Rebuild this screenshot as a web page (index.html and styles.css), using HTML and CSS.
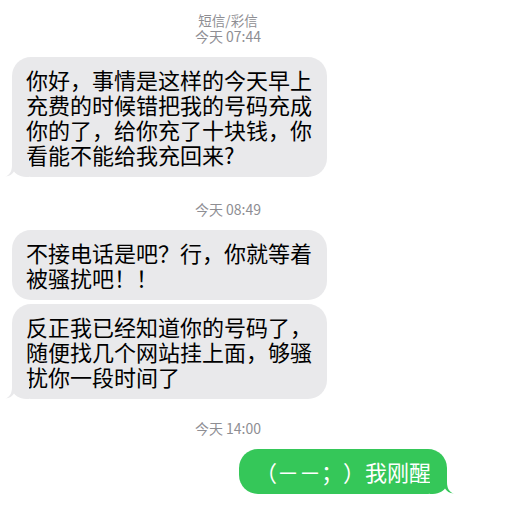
FILE: index.html
```html
<!DOCTYPE html>
<html lang="zh-CN">
<head>
<meta charset="utf-8">
<title>短信/彩信</title>
<link rel="stylesheet" href="styles.css">
</head>
<body>
<div class="thread">
  <div class="stamp">
    <div class="service">短信/彩信</div>
    <div class="time">今天 07:44</div>
  </div>
  <div class="row in">
    <div class="bubble gray tail">你好，事情是这样的今天早上充费的时候错把我的号码充成你的了，给你充了十块钱，你看能不能给我充回来?
      <svg class="tail-left" width="24" height="20" viewBox="0 0 24 20"><path d="M0 19.6 C4.5 19.4 7.5 17 9 14.5 C11.5 18 16 20 24 20 L24 0 L7 0 L7 8 C7 14 5 18 0 19.6 Z" fill="#e9e9eb"/></svg>
    </div>
  </div>

  <div class="stamp gap">
    <div class="time">今天 08:49</div>
  </div>
  <div class="row in">
    <div class="bubble gray">不接电话是吧？行，你就等着被骚扰吧！！</div>
  </div>
  <div class="row in close">
    <div class="bubble gray tail">反正我已经知道你的号码了，随便找几个网站挂上面，够骚扰你一段时间了
      <svg class="tail-left" width="24" height="20" viewBox="0 0 24 20"><path d="M0 19.6 C4.5 19.4 7.5 17 9 14.5 C11.5 18 16 20 24 20 L24 0 L7 0 L7 8 C7 14 5 18 0 19.6 Z" fill="#e9e9eb"/></svg>
    </div>
  </div>

  <div class="stamp gap last">
    <div class="time">今天 14:00</div>
  </div>
  <div class="row out">
    <div class="bubble green tail">（－－；）我刚醒
      <svg class="tail-right" width="24" height="20" viewBox="0 0 24 20"><path d="M24 19.6 C19.5 19.4 16.5 17 15 14.5 C12.5 18 8 20 0 20 L0 0 L17 0 L17 8 C17 14 19 18 24 19.6 Z" fill="#35c759"/></svg>
    </div>
  </div>
</div>
</body>
</html>
```

FILE: styles.css
```css
html, body {
  margin: 0;
  padding: 0;
  background: #ffffff;
}

body {
  font-family: "Noto Sans CJK SC", "Noto Sans", sans-serif;
  width: 510px;
  height: 509px;
  overflow: hidden;
  text-spacing-trim: space-all;
}

.thread {
  width: 456px;
  padding-top: 12px;
  display: flex;
  flex-direction: column;
}

.stamp {
  display: flex;
  flex-direction: column;
  align-items: center;
  color: #8e8e93;
  margin-bottom: 13px;
}

.stamp.gap {
  margin-top: 24px;
}

.stamp.gap.last {
  margin-top: 21px;
}

.service {
  font-size: 13.5px;
  line-height: 16px;
}

.time {
  font-size: 14px;
  line-height: 16px;
}

.row {
  display: flex;
}

.row.in {
  padding-left: 12px;
  justify-content: flex-start;
}

.row.out {
  padding-right: 9px;
  justify-content: flex-end;
}

.row.close {
  margin-top: 4px;
}

.bubble {
  position: relative;
  font-size: 22px;
  line-height: 25px;
  padding: 10px 14px;
  border-radius: 19px;
  max-width: 287px;
}

.bubble.gray {
  background: #e9e9eb;
  color: #000000;
  width: 287px;
}

.bubble.green {
  background: #35c759;
  color: #ffffff;
  padding: 10px 16px;
}

.tail-left {
  position: absolute;
  left: -7px;
  bottom: 0;
}

.tail-right {
  position: absolute;
  right: -7px;
  bottom: 0;
}
```
